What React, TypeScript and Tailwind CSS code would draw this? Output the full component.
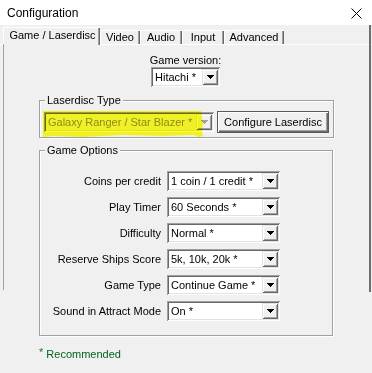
import React from 'react';

const tabs = [
  { name: 'Game / Laserdisc', w: 'w-[97px]', active: true },
  { name: 'Video', w: 'w-[40px]', active: false },
  { name: 'Audio', w: 'w-[42px]', active: false },
  { name: 'Input', w: 'w-[42px]', active: false },
  { name: 'Advanced', w: 'w-[60px]', active: false },
];

const options = [
  { label: 'Coins per credit', value: '1 coin / 1 credit *' },
  { label: 'Play Timer', value: '60 Seconds *' },
  { label: 'Difficulty', value: 'Normal *' },
  { label: 'Reserve Ships Score', value: '5k, 10k, 20k *' },
  { label: 'Game Type', value: 'Continue Game *' },
  { label: 'Sound in Attract Mode', value: 'On *' },
];

function Arrow({ disabled }: { disabled?: boolean }) {
  const c = disabled ? '#a0a0a0' : '#000000';
  return (
    <div className="flex w-[16px] shrink-0 items-center justify-center bg-[#f0f0f0] shadow-[inset_1px_1px_0_#e3e3e3,inset_-1px_-1px_0_#696969,inset_2px_2px_0_#ffffff,inset_-2px_-2px_0_#a0a0a0]">
      <svg width="7" height="4" viewBox="0 0 7 4" shapeRendering="crispEdges">
        <rect x="0" y="0" width="7" height="1" fill={c} />
        <rect x="1" y="1" width="5" height="1" fill={c} />
        <rect x="2" y="2" width="3" height="1" fill={c} />
        <rect x="3" y="3" width="1" height="1" fill={c} />
      </svg>
    </div>
  );
}

function Combo({ value, className, disabled }: { value: string; className: string; disabled?: boolean }) {
  return (
    <div
      className={`flex h-[20px] shrink-0 p-[2px] shadow-[inset_1px_1px_0_#a0a0a0,inset_-1px_-1px_0_#ffffff,inset_2px_2px_0_#696969,inset_-2px_-2px_0_#e3e3e3] ${
        disabled ? 'bg-[#f0f0f0] text-[#8c8c8c]' : 'bg-white text-black'
      } ${className}`}
    >
      <div className="flex-1 overflow-hidden whitespace-nowrap pl-[2px] leading-[16px]">{value}</div>
      <Arrow disabled={disabled} />
    </div>
  );
}

export default function App() {
  return (
    <div className="relative flex h-[373px] w-[372px] flex-col overflow-hidden bg-[#f0f0f0] font-['Liberation_Sans',Arial,sans-serif] text-[11px] text-black">
      {/* title bar */}
      <div className="flex h-[25px] shrink-0 items-center justify-between bg-white pl-[7px] pr-[10px] pt-[1px]">
        <span className="text-[12px] leading-[16px]">Configuration</span>
        <svg width="11" height="11" viewBox="0 0 11 11">
          <path d="M0.5 0.5 L10.5 10.5 M10.5 0.5 L0.5 10.5" stroke="#000" strokeWidth="1" />
        </svg>
      </div>

      {/* tabs */}
      <div className="flex h-[20px] shrink-0 items-end pl-[3px] shadow-[inset_0_-1px_0_#ffffff]">
        {tabs.map((t) =>
          t.active ? (
            <div
              key={t.name}
              className={`${t.w} flex h-[18px] items-start justify-center bg-[#f0f0f0] pl-[2px] pt-[2px] leading-[13px] shadow-[inset_1px_1px_0_#ffffff,inset_-1px_0_0_#696969,inset_-2px_0_0_#a0a0a0]`}
            >
              {t.name}
            </div>
          ) : (
            <div
              key={t.name}
              className={`${t.w} mb-[1px] flex h-[14px] items-center justify-center pt-[1px] leading-[13px] shadow-[inset_1px_1px_0_#ffffff,inset_-1px_0_0_#696969,inset_-2px_0_0_#a0a0a0]`}
            >
              {t.name}
            </div>
          )
        )}
      </div>

      {/* panel */}
      <div className="flex flex-col">
        <div className="ml-[151px] mt-[9px] flex w-[69px] flex-col items-center">
          <span className="whitespace-nowrap leading-[13px]">Game version:</span>
          <Combo value="Hitachi *" className="w-[69px]" />
        </div>

        <fieldset className="ml-[39px] mt-[7px] w-[294px] border border-[#a0a0a0] px-[4px] pb-[4px] pt-[4px] shadow-[inset_1px_1px_0_#ffffff,1px_1px_0_#ffffff]">
          <legend className="ml-[1px] bg-[#f0f0f0] px-[2px] leading-[13px]">Laserdisc Type</legend>
          <div className="flex items-center gap-[3px]">
            <div className="relative">
              <Combo value="Galaxy Ranger / Star Blazer *" className="w-[170px]" disabled />
              <svg
                className="pointer-events-none absolute left-[-1px] top-[-1px] mix-blend-multiply"
                width="162"
                height="27"
                viewBox="0 0 162 27"
              >
                <path
                  d="M0 0 H158 L159 6 L160 13 L159 20 L160 25 L156 26 L150 24 L120 25 L80 24 L40 26 L10 25 L0 26 Z"
                  fill="#ffff2a"
                />
              </svg>
            </div>
            <button className="h-[22px] w-[112px] border border-[#5a5a5a] bg-[#f0f0f0] leading-[13px] shadow-[inset_1px_1px_0_#ffffff,inset_-1px_-1px_0_#696969,inset_-2px_-2px_0_#a0a0a0]">
              Configure Laserdisc
            </button>
          </div>
        </fieldset>

        <fieldset className="ml-[39px] mt-[6px] w-[294px] border border-[#a0a0a0] px-[4px] pb-[14px] pt-[14px] shadow-[inset_1px_1px_0_#ffffff,1px_1px_0_#ffffff]">
          <legend className="ml-[1px] bg-[#f0f0f0] px-[2px] leading-[13px]">Game Options</legend>
          <div className="flex flex-col gap-[6px]">
            {options.map((o) => (
              <div key={o.label} className="flex h-[20px] items-center">
                <span className="w-[117px] whitespace-nowrap text-right leading-[13px]">{o.label}</span>
                <Combo value={o.value} className="ml-[6px] w-[113px]" />
              </div>
            ))}
          </div>
        </fieldset>

        <div className="ml-[39px] mt-[12px] leading-[13px] text-[#00641e]">
          <span className="relative top-[-2px] text-[#1c7a36]">*</span> Recommended
        </div>
      </div>

      {/* window edges */}
      <div className="absolute left-[3px] top-[44px] h-[246px] w-[1px] bg-[#a0a0a0]" />
      <div className="absolute right-[1px] top-[25px] h-[267px] w-[2px] bg-[#6e6e6e]" />
    </div>
  );
}
